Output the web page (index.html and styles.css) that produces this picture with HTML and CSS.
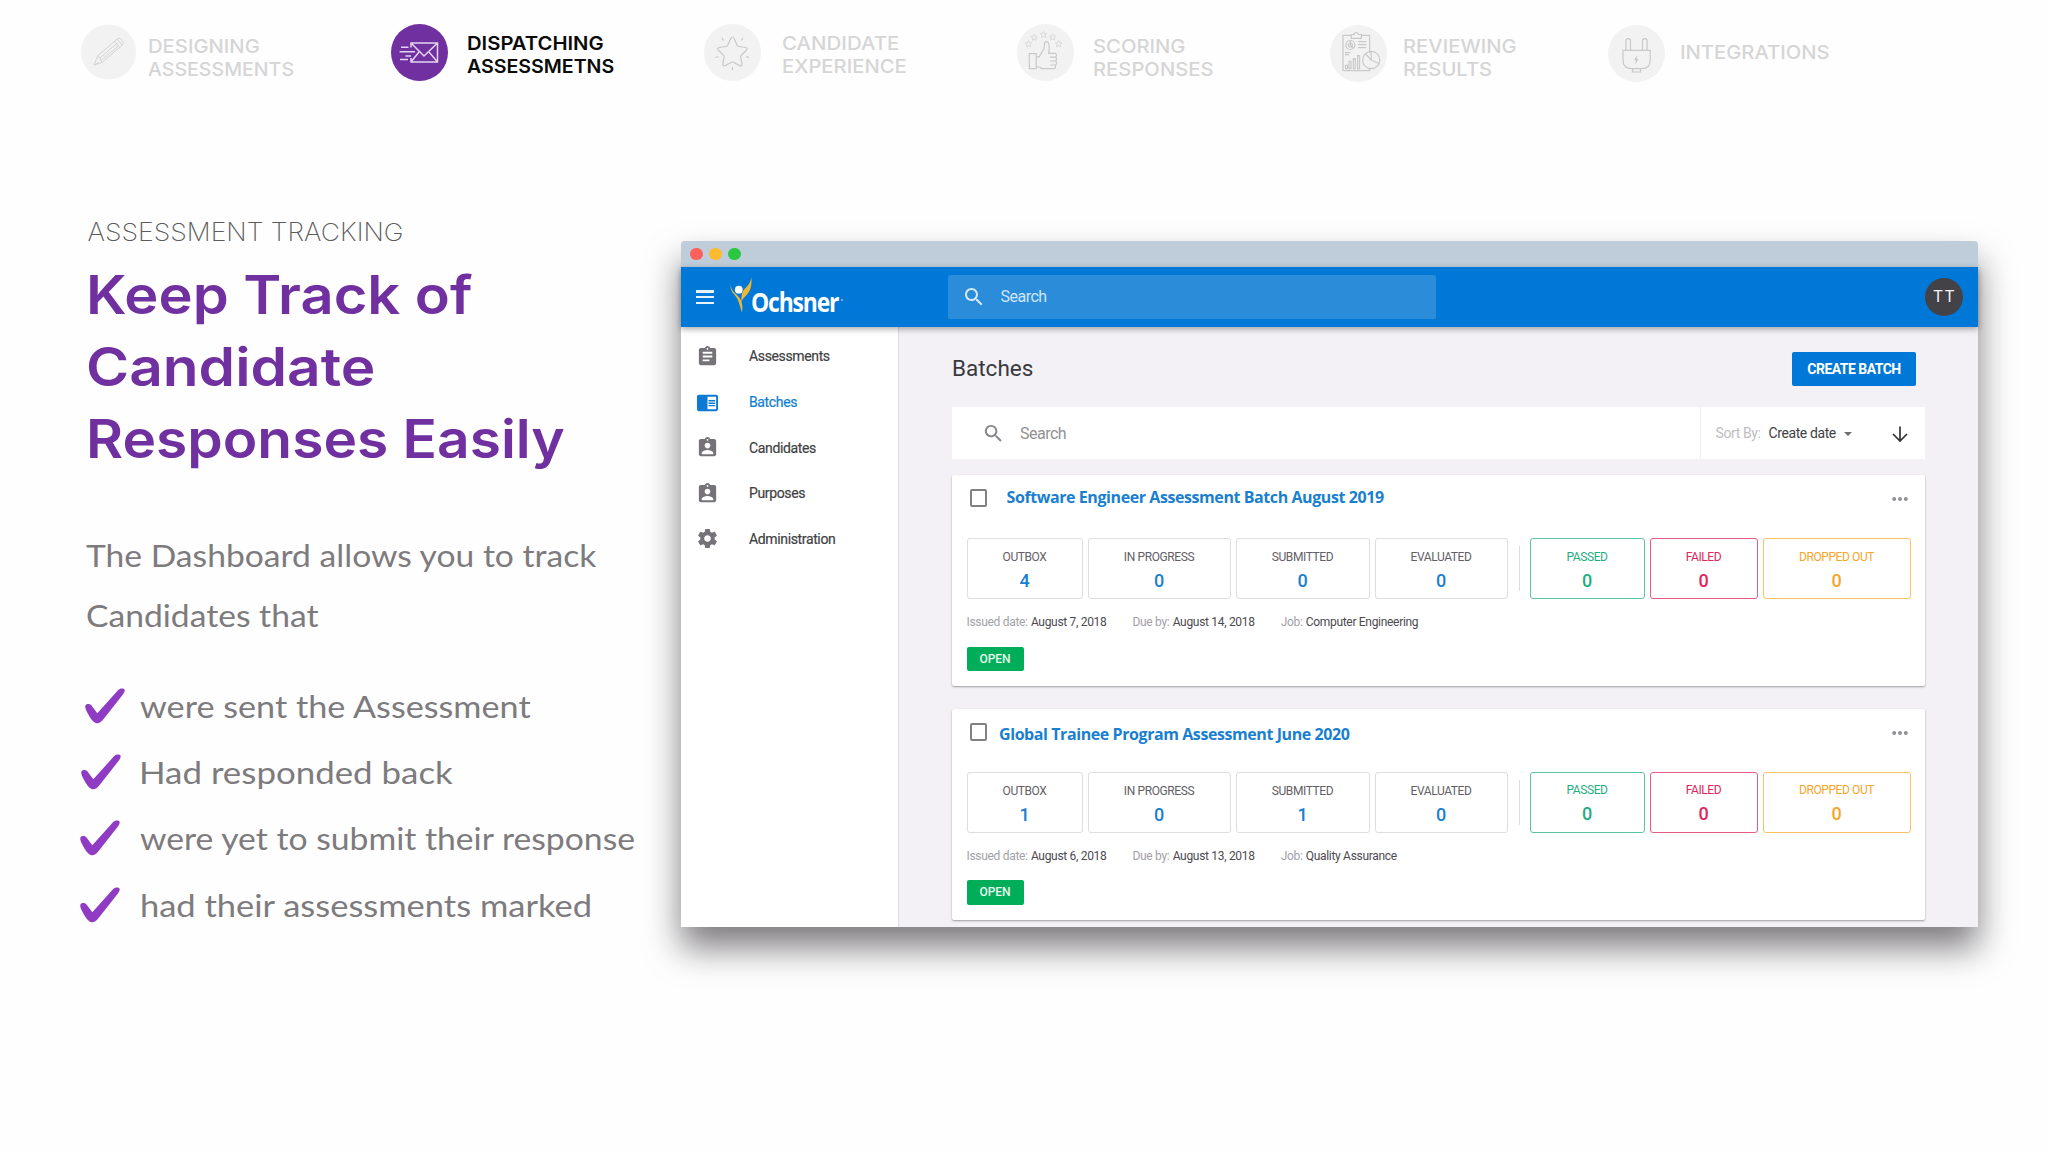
FILE: index.html
```html
<!DOCTYPE html>
<html lang="en">
<head>
<meta charset="utf-8">
<title>Assessment Tracking</title>
<link rel="stylesheet" href="styles.css">
</head>
<body>
<svg class="defs" width="0" height="0" aria-hidden="true">
  <symbol id="search" viewBox="0 0 24 24"><path d="M15.5 14h-.79l-.28-.27C15.41 12.59 16 11.11 16 9.5 16 5.91 13.09 3 9.5 3S3 5.91 3 9.5 5.91 16 9.5 16c1.61 0 3.09-.59 4.23-1.57l.27.28v.79l5 4.99L20.49 19l-4.99-5zm-6 0C7.01 14 5 11.99 5 9.5S7.01 5 9.5 5 14 7.01 14 9.5 11.99 14 9.5 14z"/></symbol>
  <symbol id="assignment" viewBox="0 0 24 24"><path d="M19 3h-4.18C14.4 1.84 13.3 1 12 1c-1.3 0-2.4.84-2.82 2H5c-1.1 0-2 .9-2 2v14c0 1.1.9 2 2 2h14c1.1 0 2-.9 2-2V5c0-1.1-.9-2-2-2zm-7 0c.55 0 1 .45 1 1s-.45 1-1 1-1-.45-1-1 .45-1 1-1zm2 14H7v-2h7v2zm3-4H7v-2h10v2zm0-4H7V7h10v2z"/></symbol>
  <symbol id="person" viewBox="0 0 24 24"><path d="M19 3h-4.18C14.4 1.84 13.3 1 12 1c-1.3 0-2.4.84-2.82 2H5c-1.1 0-2 .9-2 2v14c0 1.1.9 2 2 2h14c1.1 0 2-.9 2-2V5c0-1.1-.9-2-2-2zm-7 0c.55 0 1 .45 1 1s-.45 1-1 1-1-.45-1-1 .45-1 1-1zm0 4c1.66 0 3 1.34 3 3s-1.34 3-3 3-3-1.34-3-3 1.34-3 3-3zm6 12H6v-1.4c0-2 4-3.1 6-3.1s6 1.1 6 3.1V19z"/></symbol>
  <symbol id="reader" viewBox="0 0 24 24"><path d="M13 12h7v1.5h-7zm0-2.5h7V11h-7zm0 5h7V16h-7zM21 4H3c-1.1 0-2 .9-2 2v13c0 1.1.9 2 2 2h18c1.1 0 2-.9 2-2V6c0-1.1-.9-2-2-2zm0 15h-9V6h9v13z"/></symbol>
  <symbol id="gear" viewBox="0 0 24 24"><path d="M19.43 12.98c.04-.32.07-.64.07-.98s-.03-.66-.07-.98l2.11-1.65c.19-.15.24-.42.12-.64l-2-3.46c-.12-.22-.39-.3-.61-.22l-2.49 1c-.52-.4-1.08-.73-1.69-.98l-.38-2.65C14.46 2.18 14.25 2 14 2h-4c-.25 0-.46.18-.49.42l-.38 2.65c-.61.25-1.17.59-1.69.98l-2.49-1c-.23-.09-.49 0-.61.22l-2 3.46c-.13.22-.07.49.12.64l2.11 1.65c-.04.32-.07.65-.07.98s.03.66.07.98l-2.11 1.65c-.19.15-.24.42-.12.64l2 3.46c.12.22.39.3.61.22l2.49-1c.52.4 1.08.73 1.69.98l.38 2.65c.03.24.24.42.49.42h4c.25 0 .46-.18.49-.42l.38-2.65c.61-.25 1.17-.59 1.69-.98l2.49 1c.23.09.49 0 .61-.22l2-3.46c.12-.22.07-.49-.12-.64l-2.11-1.65zM12 15.5c-1.93 0-3.5-1.57-3.5-3.5s1.57-3.5 3.5-3.5 3.5 1.57 3.5 3.5-1.57 3.5-3.5 3.5z"/></symbol>
  <symbol id="check" viewBox="0 0 40 36"><path d="M1 17.5C2.2 15.6 5.500 15.600 7 17.600L12.800 25.300 33.500 2.300C35.300.200 39 .100 40 1.600 40.600 3 39.500 5 38 7L19.500 30.500C16 35 13.500 36 11 35 8 33.500 5.500 30 2.500 24 1 21 .3 19 1 17.500z"/></symbol>
  <symbol id="ministar" viewBox="0 0 10 10"><path d="M5 1l1.200 2.700 2.900.3-2.200 1.900.7 2.900L5 7.300 2.400 8.800l.7-2.900L.9 4l2.900-.3z"/></symbol>
  <symbol id="more" viewBox="0 0 16 6"><circle cx="2.200" cy="3" r="2"/><circle cx="8" cy="3" r="2"/><circle cx="13.800" cy="3" r="2"/></symbol>
</svg>

<nav class="steps">
  <a class="step step-low">
    <svg class="badge" viewBox="0 0 57 57"><circle class="disc" cx="28.500" cy="28" r="27.500"/><path d="M14 41l4-9.500L37.500 14.800c2-1.500 5 .5 5.500 3.500.2 1.500-.3 2.500-1.500 3.500L22 38.500zM18 31.500l1.800 2.500 2.200 4.500M34.500 17.300l5 6M37 15l5 6M19.800 34L37 19.500M21 36.500L38.500 22M14 41l4.500-2.500"/></svg>
    <span class="label"><span class="w1">DESIGNING</span><span class="w2">ASSESSMENTS</span></span>
  </a>
  <a class="step active">
    <svg class="badge" viewBox="0 0 57 57"><circle class="disc" cx="28.500" cy="28.500" r="28.500"/><path d="M20 23.500V19h26.500v19H20v-4M20 19l13 13 13.500-13M20 38l8-10M46.500 38L38 28M10 23.300h7.500M8.600 27.700H24M14.500 32H20M9 35.500h8"/></svg>
    <span class="label"><span class="w1">DISPATCHING</span><span class="w2">ASSESSMETNS</span></span>
  </a>
  <a class="step step-wide">
    <svg class="badge" viewBox="0 0 57 57"><circle class="disc" cx="28.500" cy="28.500" r="28.500"/><path class="bold" d="M26.700 14.500q1.700-3 3.400 0l3 6.800q.5 1 1.500 1.200l7 1q2.700.6.8 2.800l-5.200 5q-.8.8-.5 1.800l1.300 6.800q.2 2.800-2.300 1.700l-6.300-3.400q-1-.5-2 0l-6.300 3.400q-2.500 1.100-2.300-1.700l1.300-6.800q.3-1-.5-1.800l-5.200-5q-1.900-2.200.8-2.800l7-1q1-.2 1.500-1.200zM18 13.800l1.500 2.800M38.800 13.800l-1.500 2.800M11.500 33.500l3-.8M45.300 33.500l-3-.8M28.400 43v3"/></svg>
    <span class="label"><span class="w3">CANDIDATE</span><span class="w1">EXPERIENCE</span></span>
  </a>
  <a class="step step-low step-score">
    <svg class="badge" viewBox="0 0 57 57"><circle class="disc" cx="28.500" cy="28.500" r="28.500"/><path class="bold" d="M12.300 29.600h6.900v15h-6.900zM19.200 43h3.500l2 1.600H37q1.500 0 1.500-1.500V41q1-.5 1-2t-1-2q1-.5 1-2t-1-1.800q1-.5 1-1.800 0-2-2-2h-6l.6-3.500q.5-4-.5-6.500-1-2.500-3.200-1.500-1 .5-1 4 0 3-2 5.500l-3.200 5.500h-3M33 33.200h5.500M33 37h5.500M33 41h5.500"/><use href="#ministar" x="7.500" y="15.800" width="8" height="8"/><use href="#ministar" x="13.200" y="9.300" width="8" height="8"/><use href="#ministar" x="22.600" y="6.600" width="8" height="8"/><use href="#ministar" x="31.500" y="9" width="8" height="8"/><use href="#ministar" x="37.700" y="15.800" width="8" height="8"/></svg>
    <span class="label"><span class="w1">SCORING</span><span class="w1">RESPONSES</span></span>
  </a>
  <a class="step step-low step-review">
    <svg class="badge drop" viewBox="0 0 57 57"><circle class="disc" cx="28.500" cy="28.500" r="28.500"/><path class="bold" d="M21 10.400h-8v35.300h26.600v-3M39.600 28V10.400h-8M21.200 13.400V9.500h3q0-2 2-2t2 2h3.200v3.900zM28 16.700h8.300M28 19.700h8.300M28 22.700h8.300M15 27.700h5.400M15 29.700h4M15.500 43.700v-3.300h2v3.300zM19 43.700v-7.300h2v7.300zM23.300 43.700v-10h2v10zM27.600 43.700v-13h2v13zM20.400 20v-4.500M20.400 20l3 3M41.200 35l-5.800-6.300M41.200 35l7.500 3.500M41.200 35v-8.600"/><circle class="bold" cx="20.400" cy="20" r="4.500"/><circle class="bold" cx="20.400" cy="20" r="2"/><circle class="bold" cx="41.200" cy="35" r="8.600"/></svg>
    <span class="label"><span class="w1">REVIEWING</span><span class="w1">RESULTS</span></span>
  </a>
  <a class="step step-single">
    <svg class="badge drop" viewBox="0 0 57 57"><circle class="disc" cx="28.500" cy="28.500" r="28.500"/><path class="bold" d="M15 25.400h27.200V35q0 8.700-8.700 8.700h-9.800Q15 43.700 15 35zM17.900 25.400v-9.500q0-2.200 2.300-2.200t2.300 2.200v9.500M34.500 25.400v-9.500q0-2.200 2.300-2.200t2.300 2.200v9.500M24.500 43.700V47h8v-3.300"/><path class="bolt" d="M29.500 30.200l-3.500 5h2l-.8 4 3.300-5h-2z"/></svg>
    <span class="label"><span class="w1">INTEGRATIONS</span></span>
  </a>
</nav>

<main class="stage">
  <section class="copy">
    <p class="eyebrow">ASSESSMENT TRACKING</p>
    <h1><span class="h-a">Keep Track of</span><span class="h-b">Candidate</span><span class="h-c">Responses Easily</span></h1>
    <p class="lead">The Dashboard allows you to track<br>Candidates that</p>
    <ul class="ticks">
      <li class="t1"><svg><use href="#check"/></svg><span>were sent the Assessment</span></li>
      <li class="t2"><svg><use href="#check"/></svg><span>Had responded back</span></li>
      <li class="t3"><svg><use href="#check"/></svg><span>were yet to submit their response</span></li>
      <li class="t4"><svg><use href="#check"/></svg><span>had their assessments marked</span></li>
    </ul>
  </section>

  <section class="window">
    <div class="titlebar"><i class="red"></i><i class="yellow"></i><i class="green"></i></div>
    <header class="appbar">
      <div class="burger"><i></i><i></i><i></i></div>
      <svg class="figure" viewBox="0 0 24 38"><path fill="#f2b632" d="M1.300 9c0 4 1.500 7 4.500 10.200C9 22.500 9.500 25 13 36.500c.8-4.500.6-9-1.500-13C9 18.500 3 17 1.300 9zM22.300 1.200c-.8 5.800-3.300 8.300-6.300 11.300-3.200 3.500-3.800 7-3.500 13.500 1.200-3.800 3.500-5 6-8 3.500-4.500 4.600-10 3.800-16.800z"/><circle fill="#fff" cx="9.800" cy="13.700" r="3.900"/></svg>
      <span class="brand">Ochsner</span><i class="mark"></i>
      <div class="global-search"><svg><use href="#search"/></svg><span>Search</span></div>
      <div class="avatar">TT</div>
    </header>
    <div class="app">
      <aside class="side">
        <a><svg><use href="#assignment"/></svg>Assessments</a>
        <a class="on"><svg><use href="#reader"/></svg>Batches</a>
        <a><svg><use href="#person"/></svg>Candidates</a>
        <a><svg><use href="#person"/></svg>Purposes</a>
        <a><svg><use href="#gear"/></svg>Administration</a>
      </aside>
      <div class="content">
        <div class="heading"><h2>Batches</h2><button>CREATE BATCH</button></div>
        <div class="filter">
          <svg class="lens"><use href="#search"/></svg><span class="hint">Search</span>
          <div class="sort"><span class="muted">Sort By:</span><span>Create date</span><i class="caret"></i>
            <svg class="down" viewBox="0 0 16 16"><path d="M8 .5v14M1 8l7 7 7-7"/></svg></div>
        </div>
        <article class="card">
          <div class="card-head"><i class="box"></i><h3>Software Engineer Assessment Batch August 2019</h3><svg class="more"><use href="#more"/></svg></div>
          <div class="stats">
            <div class="stat">OUTBOX<b>4</b></div><div class="stat">IN PROGRESS<b>0</b></div><div class="stat">SUBMITTED<b>0</b></div><div class="stat">EVALUATED<b>0</b></div>
            <i class="rule"></i>
            <div class="stat pass">PASSED<b>0</b></div><div class="stat fail">FAILED<b>0</b></div><div class="stat drop-out">DROPPED OUT<b>0</b></div>
          </div>
          <div class="meta"><span><em>Issued date:</em> August 7, 2018</span><span><em>Due by:</em> August 14, 2018</span><span><em>Job:</em> Computer Engineering</span></div>
          <span class="tag">OPEN</span>
        </article>
        <article class="card second">
          <div class="card-head"><i class="box"></i><h3>Global Trainee Program Assessment June 2020</h3><svg class="more"><use href="#more"/></svg></div>
          <div class="stats">
            <div class="stat">OUTBOX<b>1</b></div><div class="stat">IN PROGRESS<b>0</b></div><div class="stat">SUBMITTED<b>1</b></div><div class="stat">EVALUATED<b>0</b></div>
            <i class="rule"></i>
            <div class="stat pass">PASSED<b>0</b></div><div class="stat fail">FAILED<b>0</b></div><div class="stat drop-out">DROPPED OUT<b>0</b></div>
          </div>
          <div class="meta"><span><em>Issued date:</em> August 6, 2018</span><span><em>Due by:</em> August 13, 2018</span><span><em>Job:</em> Quality Assurance</span></div>
          <span class="tag">OPEN</span>
        </article>
      </div>
    </div>
  </section>
</main>
</body>
</html>
```
FILE: styles.css
```css
* { box-sizing: border-box; }
body {
  margin: 0;
  width: 2048px;
  height: 1152px;
  overflow: hidden;
  background: #fefefe;
  font-family: Inter, sans-serif;
}
h1, h2, h3, p, ul { margin: 0; padding: 0; }
.defs { display: block; height: 0; }

/* Step navigation */
.steps {
  display: grid;
  grid-template-columns: 311.500px 313px 312.500px 313px 278.500px 260px;
  height: 96px;
  padding: 23.500px 0 0 79.500px;
}
.step { display: flex; gap: 18.500px; color: #d6d5d6; font-size: 19px; line-height: 23px; font-weight: 500; }
.badge { width: 57px; height: 57px; flex: none; fill: none; stroke: #d4d4d4; stroke-width: 1; }
.badge.drop { margin-top: 1.800px; }
.badge .bold { stroke: #c9c9c9; stroke-width: 1.200; }
.badge .disc { fill: #f2f2f2; stroke: none; }
.badge .bolt { fill: #c4c4c4; stroke: none; }
.label { margin-top: 8px; }
.label span { display: block; width: max-content; white-space: nowrap; transform-origin: 0 50%; }
.step-low .label { margin-top: 11.500px; }
.step-low { gap: 11.500px; }
.step-wide { gap: 20.500px; }
.step-score { gap: 19.500px; }
.step-review { gap: 16.500px; }
.step-single { gap: 15px; }
.step-single .label { margin-top: 17px; }
.w1 { transform: scaleX(1.065); }
.w2 { transform: scaleX(1.03); }
.w3 { transform: scaleX(1.077); }
.active { color: #0b0b0b; font-weight: 600; }
.active .badge { stroke: #e3d3f0; stroke-width: 1.500; }
.active .disc { fill: #7030a0; }

/* Layout below the navigation */
.stage { display: flex; }
.copy { width: 680.500px; flex: none; padding: 120.500px 0 0 86px; }
.eyebrow { width: max-content; padding-left: 1.500px; font-size: 25px; line-height: 30px; font-weight: 200; color: #5c5c5c; transform: scaleX(1.063); transform-origin: 0 50%; }
h1 { margin-top: 12px; font-size: 53px; line-height: 72.400px; font-weight: 600; color: #7030a0; }
h1 span { display: block; width: max-content; white-space: nowrap; transform-origin: 0 50%; }
.h-a { transform: scaleX(1.090); }
.h-b { transform: scaleX(1.105); }
.h-c { transform: scaleX(1.073); }
.lead { width: max-content; margin-top: 49px; font: 400 31px/60px Lato, sans-serif; color: #7d7b7e; white-space: nowrap; transform: scaleX(1.085); transform-origin: 0 50%; }
.ticks { margin-top: 28.500px; list-style: none; font: 400 31px/66px Lato, sans-serif; color: #7d7b7e; }
.ticks li { display: flex; align-items: center; height: 66.100px; margin-left: -7px; white-space: nowrap; }
.ticks span { transform-origin: 0 50%; }
.ticks svg { width: 41px; height: 36px; margin-right: 19.500px; fill: #8f3bc4; }
.ticks .t1 svg { margin-left: 4.500px; margin-right: 15px; }
.ticks .t2 svg { margin-left: 1px; margin-right: 18px; }
.t1 span { transform: scaleX(1.103); }
.t2 span { transform: scaleX(1.125); }
.t3 span { transform: scaleX(1.087); }
.t4 span { transform: scaleX(1.112); }

/* Browser window */
.window {
  width: 1297px;
  height: 686.500px;
  margin-top: 144.700px;
  border-radius: 4px 4px 0 0;
  background: #f3f1f5;
  box-shadow: 0 21px 34px rgba(20, 14, 22, .54);
  font-family: Roboto, sans-serif;
}
.titlebar { display: flex; align-items: center; gap: 6.500px; height: 26.500px; padding-left: 9.500px; border-radius: 4px 4px 0 0; background: #bfccda; }
.titlebar i { width: 12.500px; height: 12.500px; border-radius: 50%; }
.red { background: #fc605b; }
.yellow { background: #fdbc2e; }
.green { background: #29c840; }
.appbar {
  position: relative;
  display: flex;
  align-items: center;
  height: 60px;
  padding: 0 14.500px 0 15px;
  background: #0078d7;
  box-shadow: 0 2px 6px rgba(0, 0, 0, .35);
}
.burger { display: grid; gap: 3.500px; width: 18.500px; }
.burger i { height: 2.200px; background: #e6f2fc; }
.figure { width: 24px; height: 38px; margin: -4px 0 0 14.500px; }
.brand { width: 89px; margin: 9px 0 0 -1.500px; font: 700 26px/30px "Open Sans", sans-serif; letter-spacing: -1.300px; color: #fff; transform: scaleX(.88); transform-origin: 0 50%; }
.mark { width: 2px; height: 2px; margin: 5px 0 0 1px; border-radius: 50%; background: #8fc3ee; }
.global-search {
  display: flex;
  align-items: center;
  width: 488.500px;
  height: 44px;
  margin-left: 104.500px;
  padding-left: 14.500px;
  border-radius: 2px;
  background: #2b8dda;
  color: #cfe5f8;
  font-size: 16px;
  letter-spacing: -.5px;
}
.global-search svg { width: 24px; height: 24px; margin-right: 14.500px; fill: #d4e8f9; }
.global-search span { margin-top: -2px; }
.avatar { width: 38.500px; height: 38.500px; margin-left: auto; padding-left: 2px; border-radius: 50%; background: #424247; color: #f2f2f2; font-size: 16px; line-height: 37px; letter-spacing: 2px; text-align: center; }

.app { display: flex; height: 600px; }
.side { width: 218px; padding-top: 6.500px; border-right: 1px solid #dcdadf; background: #fff; }
.side a { display: flex; align-items: center; height: 45.600px; padding-left: 15px; color: #3f3f44; font-size: 14px; letter-spacing: -.36px; -webkit-text-stroke: .2px; }
.side svg { width: 23px; height: 23px; margin-right: 30.500px; fill: #757378; }
.side .on { color: #1180d4; }
.side .on svg { fill: #0f7ad4; }

.content { flex: 1; padding: 0 53px 0 53.500px; }
.heading { display: flex; align-items: center; justify-content: space-between; height: 79.700px; padding: 4px 8.500px 0 0; }
h2 { margin-top: -2px; font-size: 22.500px; font-weight: 400; color: #39393d; }
button { width: 124px; height: 34px; padding: 0; border: 0; border-radius: 2px; background: #0078d7; color: #fff; font: 700 14px/34px Roboto, sans-serif; letter-spacing: -.52px; }
.filter { display: flex; align-items: center; height: 52.300px; padding-left: 29.500px; background: #fff; font-size: 14px; letter-spacing: -.4px; color: #414146; }
.lens { width: 23px; height: 23px; margin-right: 15.500px; fill: #858388; }
.hint { font-size: 16px; letter-spacing: -.5px; color: #919095; }
.sort { display: flex; align-items: center; width: 225px; height: 100%; margin-left: auto; padding-left: 15px; border-left: 1px solid #f1eff3; white-space: nowrap; }
.muted { margin-right: 8px; color: #bfbdc2; }
.caret { margin: 2px 0 0 8px; border: 4.500px solid transparent; border-top-color: #6d6b70; border-bottom: 0; }
.down { width: 16px; height: 16px; margin: 1px 17px 0 auto; fill: none; stroke: #333; stroke-width: 1.700; }

.card { height: 211px; margin-top: 16px; padding: 14px 14.500px 0; border-radius: 2px; background: #fff; box-shadow: 0 1px 2px rgba(40, 36, 44, .42); }
.card-head { display: flex; height: 49px; padding-left: 3px; }
.box { width: 17.500px; height: 17.500px; border: 2px solid #828085; border-radius: 2px; }
h3 { margin: -3px 0 0 19.500px; font: 700 16px/22px "Open Sans", sans-serif; letter-spacing: -.42px; color: #1a7fcf; }
.more { width: 16px; height: 6px; margin: 7px 2.500px 0 auto; fill: #929096; }
.stats { display: grid; grid-template-columns: 116px 143px 134px 133px 1.500px 115px 108px 148px; column-gap: 5px; height: 61px; }
.stat { padding-top: 11px; border: 1px solid #dfdce2; border-radius: 3px; color: #626066; font-size: 12px; line-height: 15px; letter-spacing: -.4px; text-align: center; }
.stat b { display: block; margin-top: 6px; color: #1a7fcf; font-size: 18px; line-height: 20px; font-weight: 500; }
.rule { width: 1.500px; height: 45px; margin: 8px 0 0 6px; background: #dedce1; }
.pass, .fail, .drop-out { padding-top: 10.500px; border-width: 1.500px; margin-left: 10.500px; margin-right: -10.500px; }
.pass, .pass b { color: #1fae82; }
.pass { border-color: #5cc4a4; }
.fail, .fail b { color: #e0265c; }
.fail { border-color: #e65c85; }
.drop-out, .drop-out b { color: #f5a52a; }
.drop-out { border-color: #f7c268; }
.meta { display: flex; gap: 26px; margin-top: 15px; font-size: 12px; line-height: 17px; letter-spacing: -.31px; color: #4c4a50; }
.meta em { margin-right: .6px; font-style: normal; color: #a3a1a7; }
.tag { display: block; width: 57px; height: 24.500px; margin-top: 15.500px; border-radius: 2px; background: #00ae5a; color: #e6f8ee; font-size: 12px; line-height: 24.500px; font-weight: 500; text-align: center; }
.second { margin-top: 23px; }
.second .stats { margin-top: -.4px; }
.second h3 { margin: -.5px 0 0 12px; }
```
